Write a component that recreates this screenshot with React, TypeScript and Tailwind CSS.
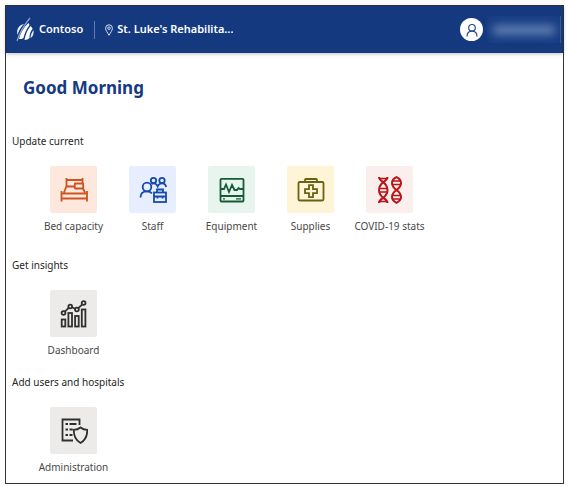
import type { ReactNode } from "react";

type Tile = { label: string; tone: string; icon: ReactNode };

const line = {
  viewBox: "0 0 28 28",
  className: "size-7",
  fill: "none",
  stroke: "currentColor",
  strokeWidth: 1.8,
  "aria-hidden": true,
} as const;

const BedIcon = () => (
  <svg {...line}>
    <path d="M6.5 2v8M22.500 2v6M6.5 4h16M6.5 10.500H14M1.500 15v10.500M27 15v10.500M1.500 17.500h25.500M1.500 22.500h25.500M6.500 10L4 16.500M23 12.500l2 4" />
    <rect x="14.800" y="7.500" width="8.400" height="5" rx="0.500" />
  </svg>
);

const StaffIcon = () => (
  <svg {...line}>
    <circle cx="8" cy="11" r="4.300" />
    <circle cx="14.500" cy="4.500" r="2.700" />
    <circle cx="23" cy="4.500" r="2.700" />
    <path d="M1.500 21.500c0-4 2.700-6.200 6.500-6.200 2.200 0 3.800.7 5 2M12.500 8c.6-.5 1.200-.7 2-.7 2 0 3.300 1 4.200 3 .9-2 2.300-3 4.300-3 2.300 0 3.800 1.300 4.200 3.700" />
    <rect x="15" y="16.500" width="12" height="9.500" />
    <path d="M18 16.500v-3h6v3M15 20.500H27M18.500 19.500v3M23.500 19.500v3" />
  </svg>
);

const EquipmentIcon = () => (
  <svg {...line}>
    <rect x="2.500" y="2.800" width="23" height="22.700" rx="1" />
    <path d="M3 20h22.500M3 13h3l2-4.500 3 7.500 3-7 2.500 5h2.500l1.500-2 1.500 1H25" />
    <path d="M5 22.800h2M18 22.800h5" strokeWidth="1.300" />
  </svg>
);

const SuppliesIcon = () => (
  <svg {...line}>
    <rect x="1.500" y="6" width="25" height="18.500" rx="1.200" />
    <path d="M8 6V4c0-.7.400-1 1-1h10c.6 0 1 .3 1 1v2" />
    <path d="M12 9.200h4v4h4v4h-4v4h-4v-4H8v-4h4z" />
  </svg>
);

const DnaIcon = () => (
  <svg {...line} strokeWidth={2}>
    <path d="M3 1c0 5 8.500 4.500 8.500 13S3 22 3 27M11.500 1c0 5-8.500 4.500-8.500 13s8.500 8 8.500 13" />
    <path d="M3 2.500h8.500M3.500 12.500h7.500M3.500 16h7.500M3 25.500h8.500" strokeWidth="1.500" />
    <path d="M20.500 1.200c-6 2.800-6 8.300 0 12.800 6 4.500 6 10 0 12.800-6-2.800-6-8.300 0-12.800 6-4.500 6-10 0-12.800z" />
    <path d="M16.500 5h8M16.500 8.500h8M16.500 19.500h8M16.500 23h8" strokeWidth="1.500" />
  </svg>
);

const DashboardIcon = () => (
  <svg {...line}>
    <rect x="1.700" y="19.500" width="3.600" height="7" />
    <rect x="8.400" y="13" width="3.600" height="13.500" />
    <rect x="15.100" y="16" width="3.600" height="10.500" />
    <rect x="21.800" y="9.500" width="3.600" height="17" />
    <circle cx="3.500" cy="13" r="1.900" />
    <circle cx="10.200" cy="6.500" r="1.900" />
    <circle cx="16.900" cy="9.500" r="1.900" />
    <circle cx="23.600" cy="3" r="1.900" />
    <path d="M4.800 11.600l4-3.700M12 7.300l3.200 1.400M18.300 8.100l4-3.700" />
  </svg>
);

const AdminIcon = () => (
  <svg {...line}>
    <path d="M19.500 8V2.500h-17v21H13" />
    <path d="M5.500 7H8M9.500 7h7M5.500 12.500H8M9.500 12.500h3.200M5.500 18H8M9.500 18h3" />
    <path d="M20.500 10.500c2 1.600 4.200 2.300 6.800 2.300 0 6.700-1.600 10.400-6.800 13.200-5.200-2.800-6.800-6.500-6.800-13.200 2.600 0 4.800-.7 6.800-2.300z" />
  </svg>
);

const sections: { title: string; tiles: Tile[] }[] = [
  {
    title: "Update current",
    tiles: [
      { label: "Bed capacity", tone: "bg-[#fee7dc] text-[#cb5420]", icon: <BedIcon /> },
      { label: "Staff", tone: "bg-[#e6eeff] text-[#1549ae]", icon: <StaffIcon /> },
      { label: "Equipment", tone: "bg-[#e8f4ee] text-[#155c35]", icon: <EquipmentIcon /> },
      { label: "Supplies", tone: "bg-[#fdf5d6] text-[#6b6112]", icon: <SuppliesIcon /> },
      { label: "COVID-19 stats", tone: "bg-[#fbefed] text-[#b8141a]", icon: <DnaIcon /> },
    ],
  },
  {
    title: "Get insights",
    tiles: [{ label: "Dashboard", tone: "bg-[#ecebea] text-[#302f2e]", icon: <DashboardIcon /> }],
  },
  {
    title: "Add users and hospitals",
    tiles: [{ label: "Administration", tone: "bg-[#ecebea] text-[#302f2e]", icon: <AdminIcon /> }],
  },
];

function Header() {
  return (
    <header className="flex h-[47px] items-center bg-[#14397f] pr-0.5 pl-2.5 text-white shadow-[0_1px_4px_rgba(0,0,0,0.25)]">
      <svg viewBox="0 0 18 26" className="h-[26px] w-[18px]" fill="none" aria-hidden="true">
        <path d="M14 1C9 7 4 15 1 24" stroke="#8ba3d0" strokeWidth="1.200" />
        <path d="M8 7C3 8 0 12 1.500 18c1-4 3-7 6.500-11z" fill="#dfe8f8" />
        <path d="M12.500 6C8 10 4.500 16 3 22c2 0 3.500 0 4.500-1 1-5 3-9 6-13z" fill="#fff" />
        <path d="M14.500 9c-3 4-5 8-6 14 2 0 4-1 5-2 0-4 1-7 3-9 0-1-1-2-2-3z" fill="#fff" />
        <path d="M17.500 13c-2 3-3 5-3 8 2-1 3.500-3 3-8z" fill="#dfe8f8" />
      </svg>
      <span className="ml-[5px] text-[11px] font-semibold">Contoso</span>
      <span className="ml-[11px] h-[18px] w-px bg-[#5f7bad]" />
      <button type="button" className="ml-2.5 flex min-w-0 items-center gap-1 text-[11px] font-semibold">
        <svg viewBox="0 0 8 12" className="h-3 w-2 shrink-0" fill="none" stroke="#d4def0" aria-hidden="true">
          <path d="M4 11.300C2.500 8.500.6 6.500.6 4.200a3.400 3.400 0 0 1 6.800 0C7.400 6.500 5.500 8.500 4 11.300z" />
          <circle cx="4" cy="4.200" r="1.300" />
        </svg>
        <span className="truncate">St. Luke's Rehabilita...</span>
      </button>
      <button type="button" aria-label="Account" className="ml-auto flex items-center gap-1">
        <span className="flex size-[23px] items-center justify-center rounded-full bg-white text-[#294a88]">
          <svg viewBox="0 0 14 14" className="size-3.5" fill="none" stroke="currentColor" strokeWidth="1.200" aria-hidden="true">
            <circle cx="7" cy="4.800" r="3.300" />
            <path d="M2 13.500c0-3.300 2-5.400 5-5.400s5 2.100 5 5.400" />
          </svg>
        </span>
        <span className="flex h-[27px] w-[74px] items-center justify-center border-r border-[#385891] bg-[#183d83]">
          <span className="h-2.5 w-16 rounded-full bg-[#5f7cb0] blur-[4px]" />
        </span>
      </button>
    </header>
  );
}

export default function App() {
  return (
    <div className="flex min-h-screen flex-col bg-white pt-[5px] pr-1 pb-[3px] pl-[5px] font-['Noto_Sans','Open_Sans',sans-serif]">
      <div className="flex grow flex-col border border-[#333]">
        <Header />
        <main className="pt-[23px] pb-2">
          <h1 className="mb-2 pl-[17px] text-[17px] leading-6 font-bold text-[#163a80]">Good Morning</h1>
          <div className="flex flex-col gap-4 pt-[25px]">
            {sections.map((section) => (
              <section key={section.title} className="pl-1.5 first:pb-[7px]">
                <h2 className="text-[10px] leading-4 text-[#252525]">{section.title}</h2>
                <ul className="mt-[17px] flex flex-wrap pl-[22px]">
                  {section.tiles.map((tile) => (
                    <li key={tile.label} className="w-[79px]">
                      <button type="button" className="flex w-full flex-col items-center gap-[5px]">
                        <span className={`flex size-[47px] items-center justify-center rounded-[2px] ${tile.tone}`}>
                          {tile.icon}
                        </span>
                        <span className="text-[10px] leading-4 whitespace-nowrap text-[#484848]">{tile.label}</span>
                      </button>
                    </li>
                  ))}
                </ul>
              </section>
            ))}
          </div>
        </main>
      </div>
    </div>
  );
}
